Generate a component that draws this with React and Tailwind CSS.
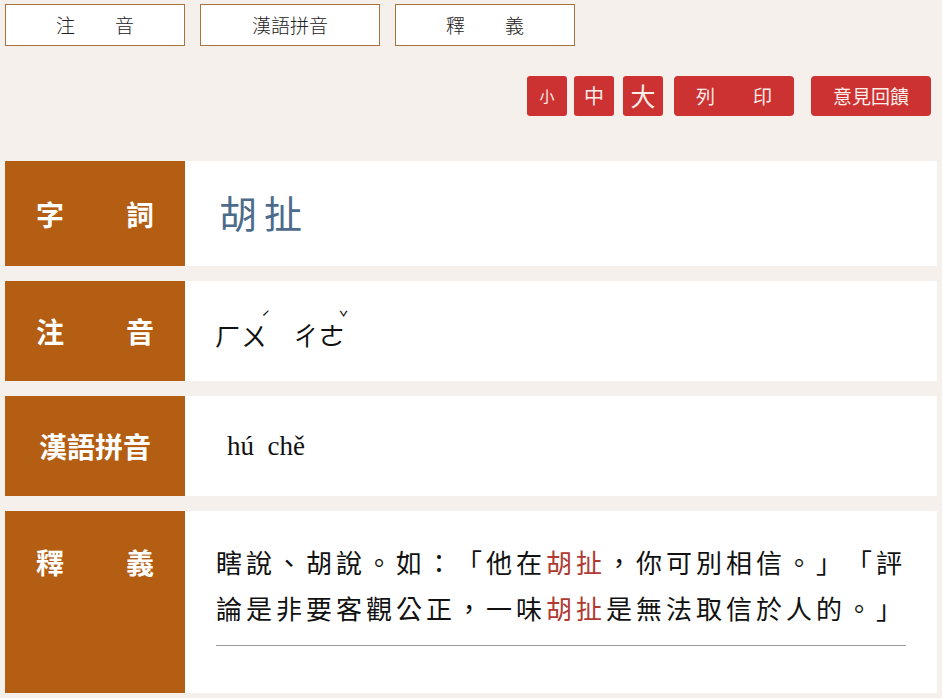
const cjk = "font-['Noto_Sans_CJK_TC','Noto_Sans_CJK_SC',sans-serif]";

function Tab({ children, spread }) {
  return (
    <div
      className={`w-[180px] h-[42px] bg-white border border-[#a8723f] flex items-center text-[19px] text-[#222] font-light ${
        spread ? "justify-between px-[50px]" : "justify-center"
      }`}
    >
      {children}
    </div>
  );
}

// 注音加上小號聲調
function Zhuyin({ base, tone }) {
  return (
    <span className="inline-flex items-start">
      <span>{base}</span>
      <span className="text-[16px] leading-none -ml-[6px] -mt-[6px]">{tone}</span>
    </span>
  );
}

export default function App() {
  return (
    <div className={`w-[942px] h-[698px] overflow-hidden bg-[#f6f0ec] ${cjk}`}>
      {/* 頁籤 */}
      <div className="flex gap-[15px] pl-[5px] pt-[4px]">
        <Tab spread>
          <span>注</span>
          <span>音</span>
        </Tab>
        <Tab>漢語拼音</Tab>
        <Tab spread>
          <span>釋</span>
          <span>義</span>
        </Tab>
      </div>

      {/* 字級與工具按鈕 */}
      <div className="flex justify-end items-center pr-[11px] mt-[30px] text-[#fdeeea]">
        <button className="w-[40px] h-[40px] bg-[#cc3232] rounded-[3px] text-[15px]">小</button>
        <button className="w-[40px] h-[40px] bg-[#cc3232] rounded-[3px] text-[20px] ml-[7px]">中</button>
        <button className="w-[40px] h-[40px] bg-[#cc3232] rounded-[3px] text-[25px] ml-[9px]">大</button>
        <button className="w-[120px] h-[40px] bg-[#cc3232] rounded-[4px] text-[19px] ml-[11px] flex justify-between items-center px-[22px]">
          <span>列</span>
          <span>印</span>
        </button>
        <button className="w-[120px] h-[40px] bg-[#cc3232] rounded-[4px] text-[19px] ml-[17px]">意見回饋</button>
      </div>

      {/* 內容 */}
      <div className="flex flex-col gap-[15px] pl-[5px] pr-[5px] mt-[45px]">
        <div className="flex h-[105px]">
          <div className="w-[180px] shrink-0 bg-[#b35e12] text-white font-bold text-[28px] flex justify-between items-center px-[31px]">
            <span>字</span>
            <span>詞</span>
          </div>
          <div className="flex-1 bg-white flex items-center pl-[34px] pb-[4px] text-[38px] text-[#4d6c8c] tracking-[7px]">
            胡扯
          </div>
        </div>

        <div className="flex h-[100px]">
          <div className="w-[180px] shrink-0 bg-[#b35e12] text-white font-bold text-[28px] flex justify-between items-center px-[31px]">
            <span>注</span>
            <span>音</span>
          </div>
          <div className="flex-1 bg-white flex items-center pl-[30px] pt-[6px] text-[26px] text-[#111]">
            <Zhuyin base="ㄏㄨ" tone="ˊ" />
            <span className="ml-[22px]">
              <Zhuyin base="ㄔㄜ" tone="ˇ" />
            </span>
          </div>
        </div>

        <div className="flex h-[100px]">
          <div className="w-[180px] shrink-0 bg-[#b35e12] text-white font-bold text-[28px] flex items-center justify-center">
            漢語拼音
          </div>
          <div className="flex-1 bg-white flex items-center pl-[42px] text-[27px] text-[#111] font-['Liberation_Serif',serif]">
            hú&nbsp;&nbsp;chě
          </div>
        </div>

        <div className="flex h-[182px]">
          <div className="w-[180px] shrink-0 bg-[#b35e12] text-white font-bold text-[28px] flex justify-between items-start pt-[30px] px-[31px]">
            <span>釋</span>
            <span>義</span>
          </div>
          <div className="flex-1 bg-white pl-[31px] pr-[26px] pt-[28px] text-[26px] leading-[46px] text-[#111] tracking-[4px] [text-spacing-trim:space-all]">
            <p>
              瞎說、胡說。如：「他在<span className="text-[#b03a32]">胡扯</span>，你可別相信。」「評論是非要客觀公正，一味<span className="text-[#b03a32]">胡扯</span>是無法取信於人的。」
            </p>
            <div className="mt-[14px] mr-[5px] border-t border-[#9a9a9a]"></div>
          </div>
        </div>
      </div>
    </div>
  );
}
